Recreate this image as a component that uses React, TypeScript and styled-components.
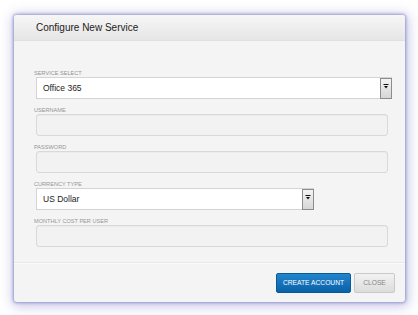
import React from "react";
import styled, { createGlobalStyle } from "styled-components";

const Global = createGlobalStyle`
  html, body { margin: 0; padding: 0; background: #ffffff; }
  body { font-family: "Liberation Sans", Arial, sans-serif; }
`;

const Page = styled.div`
  padding: 15px 13px 13px 14px;
`;

const Modal = styled.div`
  width: 391px;
  height: 287px;
  display: flex;
  flex-direction: column;
  background: #f4f4f4;
  border-radius: 3px;
  box-shadow: 0 0 3px 1px rgba(105, 105, 180, 0.6), 1px 2px 12px 3px rgba(140, 140, 210, 0.45);
  overflow: hidden;
`;

const Header = styled.div`
  height: 26px;
  box-sizing: border-box;
  display: flex;
  align-items: center;
  padding-left: 22px;
  background: linear-gradient(#f6f6f6, #e6e6e6);
  border-bottom: 1px solid #e0e0e0;
`;

const Title = styled.h1`
  margin: 0;
  font-size: 10px;
  font-weight: normal;
  color: #1c1c1c;
`;

const Body = styled.div`
  flex: 1;
  padding: 28px 0 8px 22px;
`;

const Group = styled.div`
  margin-bottom: 7px;
`;

const Label = styled.label`
  display: block;
  height: 8px;
  line-height: 8px;
  font-size: 5.6px;
  color: #959595;
  text-transform: uppercase;
  margin-left: -2px;
`;

const TextInput = styled.div`
  width: 352px;
  height: 22px;
  box-sizing: border-box;
  background: #f2f2f2;
  border: 1px solid #d9d9d9;
  border-radius: 3px;
  box-shadow: inset 0 1px 1px rgba(0, 0, 0, 0.03);
`;

const SelectBox = styled.div<{ $w: number }>`
  width: ${(p) => p.$w}px;
  height: 22px;
  box-sizing: border-box;
  display: flex;
  align-items: stretch;
  background: #ffffff;
  border: 1px solid #d4d4d4;
`;

const SelectValue = styled.div`
  flex: 1;
  display: flex;
  align-items: center;
  padding-left: 6px;
  font-size: 8.5px;
  color: #222;
`;

const Arrow = styled.div`
  width: 12px;
  box-sizing: border-box;
  display: flex;
  justify-content: center;
  padding-top: 5px;
  background: linear-gradient(#f4f4f4, #d6d6d6);
  border: 1px solid #8c8c8c;
  margin: 0 -1px -1px 0;
`;

const Footer = styled.div`
  height: 40px;
  box-sizing: border-box;
  display: flex;
  justify-content: flex-end;
  align-items: center;
  gap: 3px;
  padding-right: 10px;
  border-top: 1px solid #e9e9e9;
  box-shadow: inset 0 1px 0 #fafafa;
`;

const Button = styled.button<{ $primary?: boolean }>`
  height: 20px;
  box-sizing: border-box;
  padding: 0;
  width: ${(p) => (p.$primary ? 75 : 41)}px;
  font-family: "Liberation Sans", Arial, sans-serif;
  font-size: 6.7px;
  text-transform: uppercase;
  border-radius: 2px;
  cursor: pointer;
  color: ${(p) => (p.$primary ? "#ffffff" : "#858585")};
  background: ${(p) =>
    p.$primary ? "linear-gradient(#2384cc, #0862a8)" : "linear-gradient(#f2f2f2, #dcdcdc)"};
  border: 1px solid ${(p) => (p.$primary ? "#0b5a98" : "#c9c9c9")};
`;

const Caret = () => (
  <svg width="6" height="5" viewBox="0 0 6 5">
    <rect x="0.5" y="0" width="5" height="1" fill="#111" />
    <polygon points="1,2 5,2 3,4.5" fill="#111" />
  </svg>
);

const Select = ({ value, width }: { value: string; width: number }) => (
  <SelectBox $w={width}>
    <SelectValue>{value}</SelectValue>
    <Arrow>
      <Caret />
    </Arrow>
  </SelectBox>
);

export default function App() {
  return (
    <>
      <Global />
      <Page>
        <Modal>
          <Header>
            <Title>Configure New Service</Title>
          </Header>
          <Body>
            <Group>
              <Label>Service Select</Label>
              <Select value="Office 365" width={356} />
            </Group>
            <Group>
              <Label>Username</Label>
              <TextInput />
            </Group>
            <Group>
              <Label>Password</Label>
              <TextInput />
            </Group>
            <Group>
              <Label>Currency Type</Label>
              <Select value="US Dollar" width={278} />
            </Group>
            <Group>
              <Label>Monthly Cost Per User</Label>
              <TextInput />
            </Group>
          </Body>
          <Footer>
            <Button $primary>Create Account</Button>
            <Button>Close</Button>
          </Footer>
        </Modal>
      </Page>
    </>
  );
}
